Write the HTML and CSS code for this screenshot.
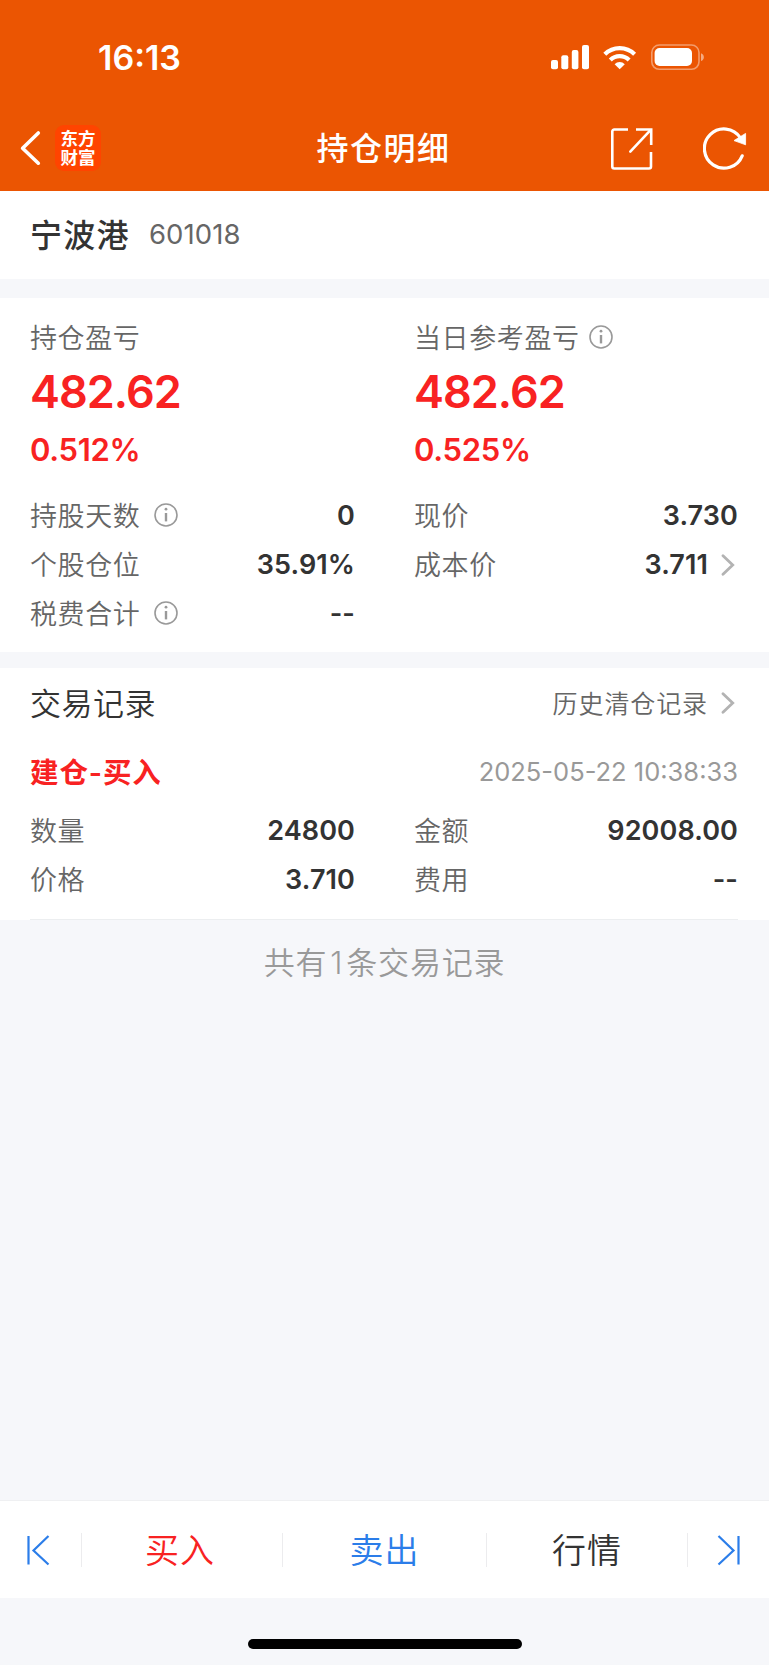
FILE: index.html
```html
<!DOCTYPE html>
<html lang="zh-CN">
<head>
    <meta charset="UTF-8">
    <meta name="viewport" content="width=device-width, initial-scale=1.0">
    <title>持仓明细</title>
    <link rel="stylesheet" href="styles.css">
</head>
<body>
    <!-- header start-->
    <div class="header">
        <div class="status">
            <span class="time">16:13</span>
            <svg class="status-icons" width="156" height="28" viewBox="0 0 156 28">
                <g fill="#fff">
                    <rect x="1" y="16" width="7" height="9.3" rx="2"/>
                    <rect x="11.3" y="11.3" width="7" height="14" rx="2"/>
                    <rect x="21.8" y="6" width="6.6" height="19.3" rx="2"/>
                    <rect x="32" y="1" width="7" height="24.3" rx="2"/>
                    <path d="M69.7 25.3L64.6 20.2a7.3 7.3 0 0 1 10.2 0z"/>
                </g>
                <g fill="none" stroke="#fff" stroke-width="4.2">
                    <path d="M54.8 10.3a21.2 21.2 0 0 1 29.8 0"/>
                    <path d="M60.3 16a13.2 13.2 0 0 1 18.8 0"/>
                </g>
                <rect x="101.8" y="1" width="47.2" height="24.3" rx="7.5" fill="none" stroke="#fff" stroke-opacity=".42" stroke-width="1.6"/>
                <path d="M151 9.2c3.8 1.3 3.8 6.6 0 7.9z" fill="#fff" fill-opacity=".5"/>
                <rect x="104.6" y="4" width="37.4" height="18" rx="5" fill="#fff"/>
            </svg>
        </div>
        <div class="nav">
            <div class="nav-left">
                <svg width="21" height="36" viewBox="0 0 21 36"><path d="M18.3 3L2.6 18.3L18.3 33.2" fill="none" stroke="#fff" stroke-width="3.6" stroke-linecap="round" stroke-linejoin="round"/></svg>
                <div class="logo">东方<br>财富</div>
            </div>
            <h1 class="title">持仓明细</h1>
            <div class="nav-right">
                <svg class="share" width="42" height="42" viewBox="0 0 42 42" fill="none" stroke="#fff" stroke-width="2.6">
                    <path d="M17 1.5H3.3a2 2 0 0 0-2 2V38.5a2 2 0 0 0 2 2H38a2 2 0 0 0 2-2V24"/>
                    <path d="M25 1.5H40.2V17"/>
                    <path d="M39 2.7L19.3 23.6" stroke-linecap="round"/>
                </svg>
                <svg width="44" height="44" viewBox="0 0 44 44">
                    <path d="M37.4 11.8A19.6 19.6 0 1 0 39.2 29.8" fill="none" stroke="#fff" stroke-width="3.2" stroke-linecap="round"/>
                    <path d="M42.6 7.4V18.8L31 14.6z" fill="#fff" stroke="#fff" stroke-width=".8" stroke-linejoin="round"/>
                </svg>
            </div>
        </div>
    </div>
    <!-- header end-->

    <div class="stock">
        <span class="stock-name">宁波港</span>
        <span class="stock-code">601018</span>
    </div>

    <!-- position start-->
    <div class="position">
        <div class="col">
            <div class="label">持仓盈亏</div>
            <div class="amount">482.62</div>
            <div class="percent">0.512%</div>
            <div class="row">
                <span class="label">持股天数</span>
                <svg class="info" viewBox="0 0 24 24"><circle cx="12" cy="12" r="11"/><path d="M12 10v8.4"/><circle class="dot" cx="12" cy="6.2" r="1.4"/></svg>
                <span class="value">0</span>
            </div>
            <div class="row">
                <span class="label">个股仓位</span>
                <span class="value">35.91%</span>
            </div>
            <div class="row">
                <span class="label">税费合计</span>
                <svg class="info" viewBox="0 0 24 24"><circle cx="12" cy="12" r="11"/><path d="M12 10v8.4"/><circle class="dot" cx="12" cy="6.2" r="1.4"/></svg>
                <span class="value">--</span>
            </div>
        </div>
        <div class="col">
            <div class="label">当日参考盈亏<svg class="info near" viewBox="0 0 24 24"><circle cx="12" cy="12" r="11"/><path d="M12 10v8.4"/><circle class="dot" cx="12" cy="6.2" r="1.4"/></svg></div>
            <div class="amount">482.62</div>
            <div class="percent">0.525%</div>
            <div class="row">
                <span class="label">现价</span>
                <span class="value">3.730</span>
            </div>
            <div class="row">
                <span class="label">成本价</span>
                <span class="value">3.711</span>
                <svg class="arrow" viewBox="0 0 14 22"><path d="M2 1.8L11.7 11L2 20.2"/></svg>
            </div>
        </div>
    </div>
    <!-- position end-->

    <!-- records start-->
    <div class="records">
        <div class="records-head">
            <h2>交易记录</h2>
            <span class="history">历史清仓记录</span>
            <svg class="arrow" viewBox="0 0 14 22"><path d="M2 1.8L11.7 11L2 20.2"/></svg>
        </div>
        <div class="record-title">
            <span class="type">建仓-买入</span>
            <span class="date">2025-05-22 10:38:33</span>
        </div>
        <div class="record">
            <div class="col">
                <div class="row">
                    <span class="label">数量</span>
                    <span class="value">24800</span>
                </div>
                <div class="row">
                    <span class="label">价格</span>
                    <span class="value">3.710</span>
                </div>
            </div>
            <div class="col">
                <div class="row">
                    <span class="label">金额</span>
                    <span class="value">92008.00</span>
                </div>
                <div class="row">
                    <span class="label">费用</span>
                    <span class="value">--</span>
                </div>
            </div>
        </div>
    </div>
    <p class="total">共有<span class="count">1</span>条交易记录</p>
    <!-- records end-->

    <div class="tabbar">
        <div class="tab side">
            <svg width="24" height="32" viewBox="0 0 24 32"><path d="M2.5 2V30.5M22.5 2L7.5 16.5L22.5 30.5"/></svg>
        </div>
        <div class="tab buy">买入</div>
        <div class="tab sell">卖出</div>
        <div class="tab quote">行情</div>
        <div class="tab side last">
            <svg width="24" height="32" viewBox="0 0 24 32"><path d="M21.5 2V30.5M1.5 2L16.5 16.5L1.5 30.5"/></svg>
        </div>
    </div>
    <div class="home">
        <div class="home-bar"></div>
    </div>
</body>
</html>
```
FILE: styles.css
```css
*{
    box-sizing: border-box;
}
body{
    margin: 0;
    height: 1665px;
    display: flex;
    flex-direction: column;
    background-color: #f6f7fa;
    color: #333;
    font-family: Inter, "Noto Sans CJK SC", sans-serif;
}
svg{
    display: block;
    flex: none;
}
h1, h2, p{
    margin: 0;
}

/* header */
.header{
    height: 191px;
    background-color: #eb5502;
    color: #fff;
}
.status{
    height: 105px;
    padding: 37px 63px 0 98px;
    display: flex;
    justify-content: space-between;
}
.time{
    font-size: 34px;
    font-weight: 600;
    line-height: 42px;
}
.status-icons{
    margin-top: 7px;
}
.nav{
    height: 86px;
    padding: 0 22px 0 20px;
    display: grid;
    grid-template-columns: 1fr auto 1fr;
    align-items: center;
}
.nav-left{
    display: flex;
    align-items: center;
    gap: 14px;
}
.logo{
    width: 46px;
    height: 46px;
    border-radius: 9px;
    background-color: #ff4400;
    padding-top: 4px;
    text-align: center;
    font-size: 17.5px;
    font-weight: 700;
    line-height: 19px;
}
.title{
    padding-top: 1px;
    font-size: 32px;
    font-weight: 500;
    letter-spacing: 1.5px;
    line-height: 40px;
}
.nav-right{
    display: flex;
    justify-content: flex-end;
    align-items: center;
    gap: 50px;
}
.share{
    margin-top: 2px;
}

/* stock name */
.stock{
    height: 88px;
    padding: 0 30px;
    background-color: #fff;
    display: flex;
    align-items: center;
    gap: 19px;
}
.stock-name{
    padding-bottom: 5px;
    font-size: 32px;
    font-weight: 500;
    letter-spacing: 1.3px;
}
.stock-code{
    padding-bottom: 2px;
    font-size: 27.5px;
    color: #666;
    letter-spacing: 0.1px;
}

/* position */
.position{
    margin-top: 19px;
    height: 354px;
    padding: 20px 31px 0 30px;
    background-color: #fff;
    display: grid;
    grid-template-columns: 325px 324px;
    column-gap: 59px;
}
.label{
    display: flex;
    align-items: center;
    height: 40px;
    padding-bottom: 3px;
    font-size: 27px;
    font-weight: 350;
    letter-spacing: 0.6px;
    color: #666;
}
.amount{
    margin-top: 9px;
    font-size: 45px;
    font-weight: 600;
    line-height: 50px;
    letter-spacing: -1px;
    color: #f82222;
}
.percent{
    margin: 17px 0 25px;
    font-size: 31px;
    font-weight: 600;
    line-height: 32px;
    letter-spacing: -0.3px;
    color: #f82222;
}
.row{
    height: 49px;
    display: flex;
    align-items: center;
}
.value{
    margin-left: auto;
    font-size: 27px;
    font-weight: 600;
    letter-spacing: 0.1px;
}
.info{
    width: 24px;
    height: 24px;
    margin-left: 14px;
    margin-bottom: 2px;
    fill: none;
    stroke: #999;
    stroke-width: 1.6;
}
.info path{
    stroke-width: 2.4;
}
.info .dot{
    fill: #999;
    stroke: none;
}
.info.near{
    margin-left: 9px;
    margin-bottom: 0;
}
.arrow{
    width: 14px;
    height: 22px;
    margin-left: 13px;
    margin-right: 3px;
    fill: none;
    stroke: #b3b3b3;
    stroke-width: 2.8;
    stroke-linecap: round;
}

/* records */
.records{
    margin-top: 16px;
    height: 252px;
    padding: 0 31px 0 30px;
    background-color: #fff;
}
.records-head{
    height: 70px;
    display: flex;
    align-items: center;
}
.records-head h2{
    margin-right: auto;
    padding-bottom: 4px;
    font-size: 31px;
    font-weight: 350;
    letter-spacing: 0.5px;
}
.history{
    padding-bottom: 2px;
    font-size: 25px;
    font-weight: 350;
    color: #666;
    letter-spacing: 0.9px;
}
.record-title{
    height: 67px;
    display: flex;
    align-items: center;
    justify-content: space-between;
}
.type{
    padding-bottom: 3px;
    font-size: 28.5px;
    font-weight: 600;
    letter-spacing: 0.9px;
    color: #f82222;
}
.date{
    font-size: 25.5px;
    color: #999;
}
.record{
    height: 115px;
    padding-top: 1px;
    border-bottom: 1px solid #eceef0;
    display: grid;
    grid-template-columns: 325px 324px;
    column-gap: 59px;
}
.total{
    margin-top: 19px;
    text-align: center;
    font-size: 31px;
    font-weight: 350;
    line-height: 48px;
    letter-spacing: 0.8px;
    color: #999;
}
.count{
    margin: 0 3px;
}

/* bottom bar */
.tabbar{
    margin-top: auto;
    height: 98px;
    border-top: 1px solid #eff0f2;
    background-color: #fff;
    display: grid;
    grid-template-columns: 82px 201px 204px 201px 81px;
    align-items: center;
}
.tab{
    height: 34px;
    padding-bottom: 3px;
    border-right: 1px solid #ececee;
    display: flex;
    align-items: center;
    justify-content: center;
    font-size: 34px;
    font-weight: 350;
    letter-spacing: 1px;
}
.buy{
    padding-right: 4px;
}
.last{
    border-right: none;
}
.side{
    padding: 0 5px 0 0;
}
.side.last{
    padding: 0;
}
.side path{
    fill: none;
    stroke: #2b7de9;
    stroke-width: 2.2;
}
.buy{
    color: #f82222;
}
.sell{
    color: #2b7de9;
}
.home{
    height: 67px;
    padding-top: 41px;
}
.home-bar{
    width: 274px;
    height: 10px;
    margin: 0 auto;
    border-radius: 5px;
    background-color: #000;
}
```
